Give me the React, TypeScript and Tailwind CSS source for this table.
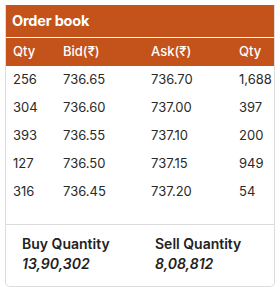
const rows = [
  { bq: "256", bid: "736.65", ask: "736.70", aq: "1,688" },
  { bq: "304", bid: "736.60", ask: "737.00", aq: "397" },
  { bq: "393", bid: "736.55", ask: "737.10", aq: "200" },
  { bq: "127", bid: "736.50", ask: "737.15", aq: "949" },
  { bq: "316", bid: "736.45", ask: "737.20", aq: "54" },
];

const OrderBook = () => {
  return (
    <div className="m-[5px] w-[270px] rounded-b-[5px] border border-t-0 border-[#dcdcdc] bg-white text-[#222] font-['Inter',sans-serif]">
      {/* title */}
      <div className="flex h-[32px] items-center bg-[#c3531a] px-[6px] text-[14.5px] font-bold tracking-[-0.2px] text-white">
        Order book
      </div>
      <div className="h-px bg-white" />
      {/* column heads */}
      <div className="grid h-[28px] grid-cols-[50px_88px_88px_1fr] items-center bg-[#c3531a] pl-[7px] text-[13px] font-medium text-white">
        <span>Qty</span>
        <span>Bid(₹)</span>
        <span>Ask(₹)</span>
        <span>Qty</span>
      </div>
      <div className="pb-[18px]">
        {rows.map((r, i) => (
          <div key={i} className="grid h-[28px] grid-cols-[50px_88px_88px_1fr] items-center pl-[7px] text-[13px] text-[#2a2a2a]">
            <span>{r.bq}</span>
            <span>{r.bid}</span>
            <span>{r.ask}</span>
            <span>{r.aq}</span>
          </div>
        ))}
      </div>
      <div className="grid grid-cols-[133px_1fr] border-t border-[#dcdcdc] pl-[16px] pt-[9px] pb-[12px]">
        <div>
          <div className="text-[14px] font-semibold leading-[20px]">Buy Quantity</div>
          <div className="text-[14px] font-semibold italic leading-[20px]">13,90,302</div>
        </div>
        <div>
          <div className="text-[14px] font-semibold leading-[20px]">Sell Quantity</div>
          <div className="text-[14px] font-semibold italic leading-[20px]">8,08,812</div>
        </div>
      </div>
    </div>
  );
};

export default function App() {
  return <OrderBook />;
}
